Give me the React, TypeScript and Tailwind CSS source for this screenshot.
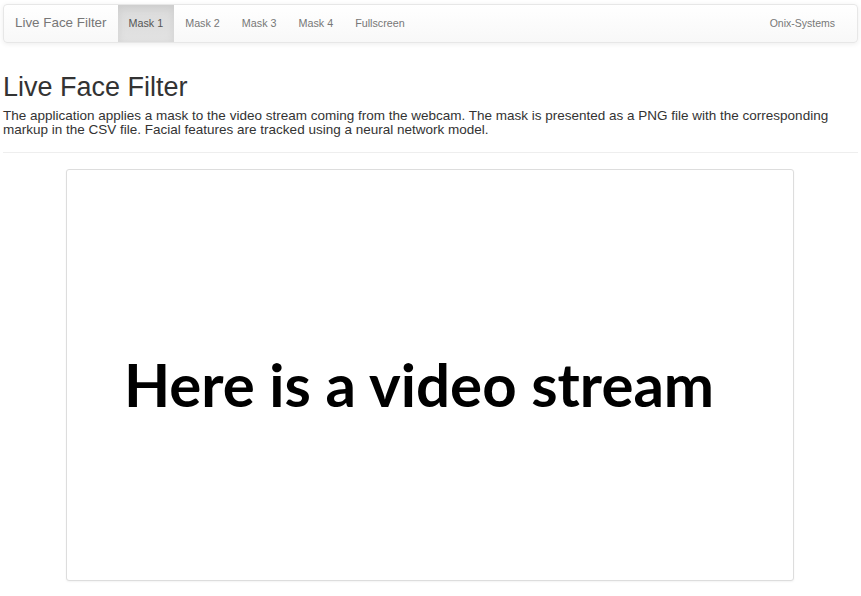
export default function App() {
  const links = ["Mask 1", "Mask 2", "Mask 3", "Mask 4", "Fullscreen"];
  return (
    <div className="min-h-[596px] bg-white px-[3px] pt-[4px] font-['Liberation_Sans',Arial,sans-serif] text-[#333]">
      <nav className="flex h-[39px] items-stretch rounded-[4px] border border-[#e7e7e7] bg-gradient-to-b from-white to-[#f8f8f8] shadow-[0_1px_5px_rgba(0,0,0,0.075)]">
        <a className="flex items-center px-[11px] text-[13.4px] text-[#777]">Live Face Filter</a>
        {links.map((l, i) => (
          <a
            key={l}
            className={
              i === 0
                ? "flex items-center bg-gradient-to-b from-[#dbdbdb] to-[#e2e2e2] px-[11px] text-[10.75px] text-[#555] shadow-[inset_0_3px_9px_rgba(0,0,0,0.075)]"
                : "flex items-center px-[11px] text-[10.75px] text-[#777]"
            }
          >
            {l}
          </a>
        ))}
        <a className="ml-auto mr-[11px] flex items-center px-[11px] text-[10.5px] text-[#777]">Onix-Systems</a>
      </nav>
      <h1 className="mt-[29px] text-[27px] leading-[30px] text-[#333]">Live Face Filter</h1>
      <p className="mt-[7px] text-[13.5px] leading-[14px]">
        The application applies a mask to the video stream coming from the webcam. The mask is presented as a PNG file with the corresponding markup in the CSV file. Facial features are tracked using a neural network model.
      </p>
      <hr className="mt-[15px] border-t border-[#eee]" />
      <div className="ml-[63px] mt-[16px] flex h-[412px] w-[728px] items-center justify-center rounded-[3px] border border-[#ddd] bg-white shadow-[0_1px_2px_rgba(0,0,0,0.05)]">
        <span className="mr-[22px] mt-[18px] font-['Lato',sans-serif] text-[60px] font-bold text-black">Here is a video stream</span>
      </div>
    </div>
  );
}
